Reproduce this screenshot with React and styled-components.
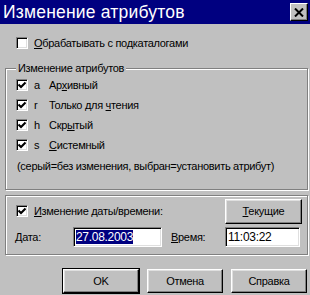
import styled, { createGlobalStyle } from "styled-components";

const GlobalStyle = createGlobalStyle`
html, body {
    margin: 0;
    padding: 0;
    background: #c0c0c0;
}
body {
    font-family: "Liberation Sans", Arial, sans-serif;
    font-size: 11px;
    letter-spacing: -0.3px;
    color: #000;
}
`

const StyledWindow = styled.div`
width: 310px;
height: 295px;
background-color: #c0c0c0;
display: flex;
flex-direction: column;
box-sizing: border-box;
overflow: hidden;
`

const StyledTitleBar = styled.div`
height: 24px;
flex-shrink: 0;
background-color: #000080;
display: flex;
align-items: center;
justify-content: space-between;
padding: 0 2px 0 3px;
`

const StyledTitle = styled.span`
color: #fff;
font-size: 17.5px;
letter-spacing: 0.2px;
`

const StyledCloseButton = styled.div`
width: 18px;
height: 18px;
box-sizing: border-box;
background-color: #c0c0c0;
border: 1px solid;
border-color: #fff #000 #000 #fff;
box-shadow: inset -1px -1px 0 #808080;
display: flex;
align-items: center;
justify-content: center;
`

const StyledBody = styled.div`
flex: 1;
display: flex;
flex-direction: column;
padding: 0 2px 0 5px;
`

const StyledCheckRow = styled.div`
display: flex;
align-items: center;
height: ${props => props.height || 20}px;
padding-left: ${props => props.indent || 0}px;
margin-top: ${props => props.top || 0}px;
`

const StyledCheckbox = styled.div`
width: 12px;
height: 12px;
box-sizing: border-box;
background-color: #fff;
border: 1px solid;
border-color: #808080 #fff #fff #808080;
box-shadow: inset 1px 1px 0 #000, inset -1px -1px 0 #dfdfdf;
display: flex;
align-items: center;
justify-content: center;
margin-right: 6px;
flex-shrink: 0;
`

const StyledLetter = styled.span`
width: 15px;
`

const StyledGroup = styled.div`
position: relative;
box-sizing: border-box;
height: ${props => props.height}px;
margin-top: ${props => props.top}px;
border: 1px solid #808080;
box-shadow: inset 1px 1px 0 #fff, 1px 1px 0 #fff;
padding: ${props => props.pad || "0"};
display: flex;
flex-direction: column;
`

const StyledLegend = styled.span`
position: absolute;
top: -8px;
left: 10px;
padding: 0 2px;
background-color: #c0c0c0;
line-height: 14px;
`

const StyledHint = styled.div`
height: 20px;
display: flex;
align-items: center;
padding-left: 11px;
margin-top: 1px;
`

const StyledFieldRow = styled.div`
display: flex;
align-items: center;
height: ${props => props.height}px;
`

const StyledButton = styled.div`
width: ${props => props.width || 76}px;
height: ${props => props.height || 24}px;
box-sizing: border-box;
background-color: #c0c0c0;
border: 1px solid;
border-color: #fff #000 #000 #fff;
box-shadow: inset -1px -1px 0 #808080, inset 1px 1px 0 #dfdfdf;
display: flex;
align-items: center;
justify-content: center;
flex-shrink: 0;
outline: ${props => props.default ? "1px solid #000" : "none"};
`

const StyledLabel = styled.span`
width: ${props => props.width}px;
flex-shrink: 0;
`

const StyledInput = styled.div`
width: ${props => props.width}px;
height: 20px;
box-sizing: border-box;
background-color: #fff;
border: 1px solid;
border-color: #808080 #fff #fff #808080;
box-shadow: inset 1px 1px 0 #000, inset -1px -1px 0 #dfdfdf;
display: flex;
align-items: center;
padding-left: 2px;
flex-shrink: 0;
font-size: 12px;
`

const StyledSelection = styled.span`
background-color: #000080;
color: #fff;
line-height: 14px;
`

const StyledButtonRow = styled.div`
display: flex;
justify-content: flex-end;
gap: 8px;
margin-top: 14px;
padding-right: 1px;
`

const Check = () => (
    <svg width="8" height="8" viewBox="0 0 8 8">
        <path d="M0.5 3.5 L3 6 L7.5 1.5" stroke="#000" strokeWidth="2" fill="none" />
    </svg>
)

function CheckItem({ checked, letter, children }) {
    return (
        <StyledCheckRow indent={10}>
            <StyledCheckbox>{checked && <Check />}</StyledCheckbox>
            {letter && <StyledLetter>{letter}</StyledLetter>}
            <span>{children}</span>
        </StyledCheckRow>
    )
}

function App() {
    return (
        <>
            <GlobalStyle />
            <StyledWindow>
                <StyledTitleBar>
                    <StyledTitle>Изменение атрибутов</StyledTitle>
                    <StyledCloseButton>
                        <svg width="10" height="9" viewBox="0 0 10 9">
                            <path d="M1 0.5 L9 8.5 M9 0.5 L1 8.5" stroke="#000" strokeWidth="2" />
                        </svg>
                    </StyledCloseButton>
                </StyledTitleBar>
                <StyledBody>
                    <StyledCheckRow indent={11} top={12} height={13}>
                        <StyledCheckbox />
                        <span><u>О</u>брабатывать с подкаталогами</span>
                    </StyledCheckRow>
                    <StyledGroup top={19} height={122} pad="6px 0 0 0">
                        <StyledLegend>Изменение атрибутов</StyledLegend>
                        <CheckItem checked letter="a">Ар<u>х</u>ивный</CheckItem>
                        <CheckItem checked letter="r">Только для <u>ч</u>тения</CheckItem>
                        <CheckItem checked letter="h">Скр<u>ы</u>тый</CheckItem>
                        <CheckItem checked letter="s"><u>С</u>истемный</CheckItem>
                        <StyledHint>(серый=без изменения, выбран=установить атрибут)</StyledHint>
                    </StyledGroup>
                    <StyledGroup top={5} height={60} pad="2px 5px 0 9px">
                        <StyledFieldRow height={26}>
                            <StyledCheckRow indent={1} height={26}>
                                <StyledCheckbox><Check /></StyledCheckbox>
                                <span><u>И</u>зменение даты/времени:</span>
                            </StyledCheckRow>
                            <div style={{ flex: 1 }} />
                            <StyledButton width={77} height={25}><span><u>Т</u>екущие</span></StyledButton>
                        </StyledFieldRow>
                        <StyledFieldRow height={26}>
                            <StyledLabel width={58}><u>Д</u>ата:</StyledLabel>
                            <StyledInput width={89}>
                                <StyledSelection>27.08.2003</StyledSelection>
                            </StyledInput>
                            <StyledLabel width={54} style={{ paddingLeft: 9 }}><u>В</u>ремя:</StyledLabel>
                            <StyledInput width={75}>11:03:22</StyledInput>
                        </StyledFieldRow>
                    </StyledGroup>
                    <StyledButtonRow>
                        <StyledButton default>OK</StyledButton>
                        <StyledButton>Отмена</StyledButton>
                        <StyledButton>Справка</StyledButton>
                    </StyledButtonRow>
                </StyledBody>
            </StyledWindow>
        </>
    )
}

export default App;
